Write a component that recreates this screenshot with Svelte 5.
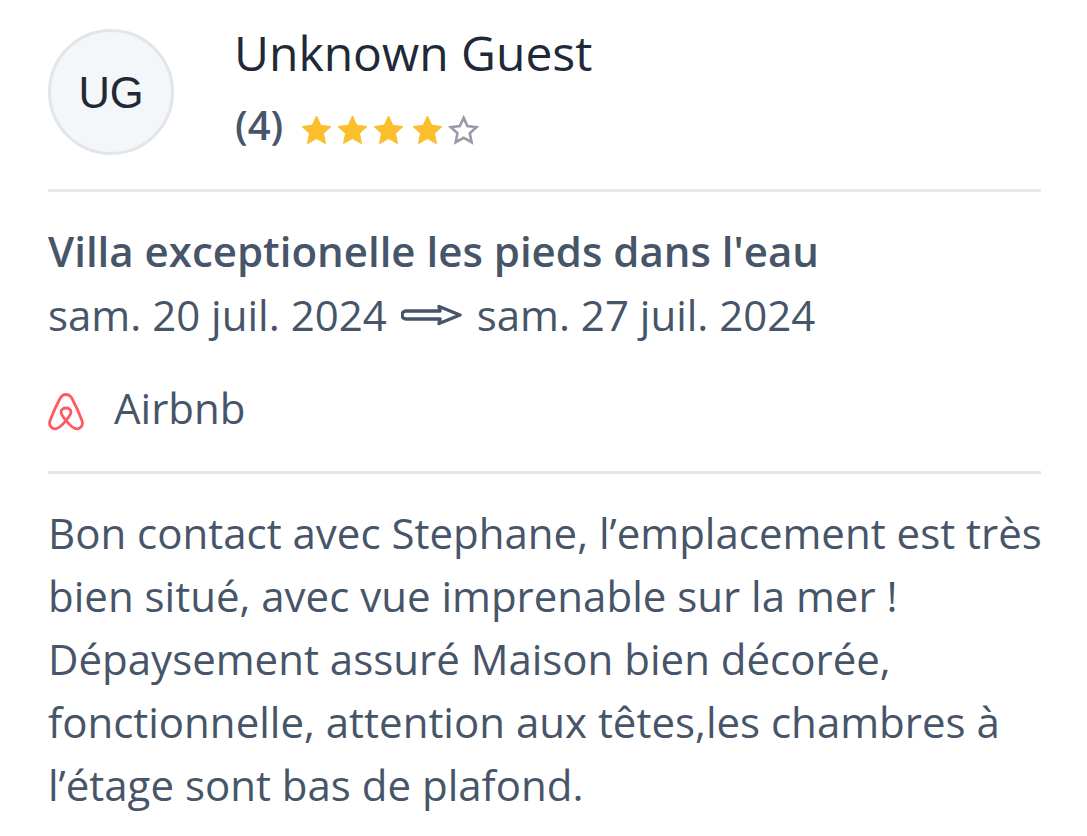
<script>
  const stars = [
    { x: 0, on: true },
    { x: 36, on: true },
    { x: 72, on: true },
    { x: 111, on: true },
    { x: 147, on: false }
  ];
  const starPath = 'M15.5 1 L19.8 10.3 L30 11.5 L22.5 18.5 L24.5 28.6 L15.5 23.6 L6.5 28.6 L8.5 18.5 L1 11.5 L11.2 10.3 Z';
</script>

<main class="page">
  <header class="head">
    <div class="avatar">UG</div>
    <div class="who">
      <div class="name">Unknown Guest</div>
      <div class="rating">
        <span class="score">(4)</span>
        <svg class="stars" width="180" height="32" viewBox="0 0 180 32" aria-hidden="true">
          {#each stars as s}
            <g transform="translate({s.x} 1)">
              {#if s.on}
                <path d={starPath} fill="#fbbf2c" stroke="#fbbf2c" stroke-width="1" stroke-linejoin="round" />
              {:else}
                <path d={starPath} transform="translate(2 2) scale(0.88)" fill="none" stroke="#9a9aac" stroke-width="3" stroke-linejoin="miter" />
              {/if}
            </g>
          {/each}
        </svg>
      </div>
    </div>
  </header>

  <section class="stay">
    <h1 class="title">Villa exceptionelle les pieds dans l'eau</h1>
    <div class="dates">
      <span>sam. 20 juil. 2024</span>
      <svg class="arrow" width="62" height="24" viewBox="0 0 62 24" aria-hidden="true">
        <path d="M5 8 H39 L38 3.5 L59 12 L38 20.5 L39 16 H5 a4 4 0 0 1 0 -8 Z" fill="none" stroke="#475569" stroke-width="3.4" stroke-linejoin="round" />
      </svg>
      <span>sam. 27 juil. 2024</span>
    </div>
    <div class="source">
      <svg class="airbnb" width="36" height="38" viewBox="0 0 36 38" aria-hidden="true">
        <path d="M18 27.5 C15.5 24.5 13 21.5 13 19 C13 16.5 15.2 15 18 15 C20.8 15 23 16.5 23 19 C23 21.5 20.5 24.5 18 27.5 C14.5 31.5 11 36 7 35.8 C3 35.6 0.6 31.8 2 27.8 C4.5 20.8 8.5 12 12 5.5 C13.5 2.8 15.6 1.5 18 1.5 C20.4 1.5 22.5 2.8 24 5.5 C27.5 12 31.5 20.8 34 27.8 C35.4 31.8 33 35.6 29 35.8 C25 36 21.5 31.5 18 27.5 Z" fill="none" stroke="#ff5a5f" stroke-width="2.8" stroke-linejoin="round" />
      </svg>
      <span>Airbnb</span>
    </div>
  </section>

  <p class="review">Bon contact avec Stephane, l’emplacement est très bien situé, avec vue imprenable sur la mer ! Dépaysement assuré Maison bien décorée, fonctionnelle, attention aux têtes,les chambres à l’étage sont bas de plafond.</p>
</main>

<style>
  :global(body) {
    margin: 0;
    background: #fff;
  }
  .page {
    box-sizing: border-box;
    width: 1087px;
    height: 836px;
    overflow: hidden;
    padding: 29px 46px 0 48px;
    font-family: "Open Sans", sans-serif;
    font-size: 42px;
    line-height: 63px;
    color: #475569;
  }
  .head {
    display: flex;
    align-items: flex-start;
    gap: 60px;
    padding-bottom: 31px;
    border-bottom: 3px solid #e5e7eb;
  }
  .avatar {
    box-sizing: border-box;
    flex: none;
    width: 126px;
    height: 126px;
    padding-top: 3px;
    border: 3px solid #e2e5e9;
    border-radius: 50%;
    background: #f4f7f9;
    display: flex;
    align-items: center;
    justify-content: center;
    font-family: "Liberation Sans", sans-serif;
    font-size: 43.5px;
    color: #1f2937;
  }
  .name {
    font-size: 48px;
    line-height: 52px;
    margin-top: -2px;
    color: #1f2937;
  }
  .rating {
    display: flex;
    align-items: center;
    gap: 18px;
    height: 63px;
    margin-top: 16px;
  }
  .score {
    font-weight: 600;
    font-size: 40px;
    line-height: 47px;
    margin: -4px 0 0 1px;
  }
  .stars {
    display: block;
    margin-top: 6px;
  }
  .stay {
    padding: 27px 0 32px;
    border-bottom: 3px solid #e5e7eb;
  }
  .title {
    margin: 0;
    font: inherit;
    font-weight: 600;
  }
  .dates {
    display: flex;
    align-items: center;
    gap: 14px;
    margin-top: 1px;
  }
  .arrow {
    display: block;
  }
  .source {
    display: flex;
    align-items: center;
    gap: 30px;
    margin-top: 30px;
  }
  .airbnb {
    display: block;
    margin-top: 8px;
  }
  .review {
    margin: 27px -10px 0 0;
  }
</style>
